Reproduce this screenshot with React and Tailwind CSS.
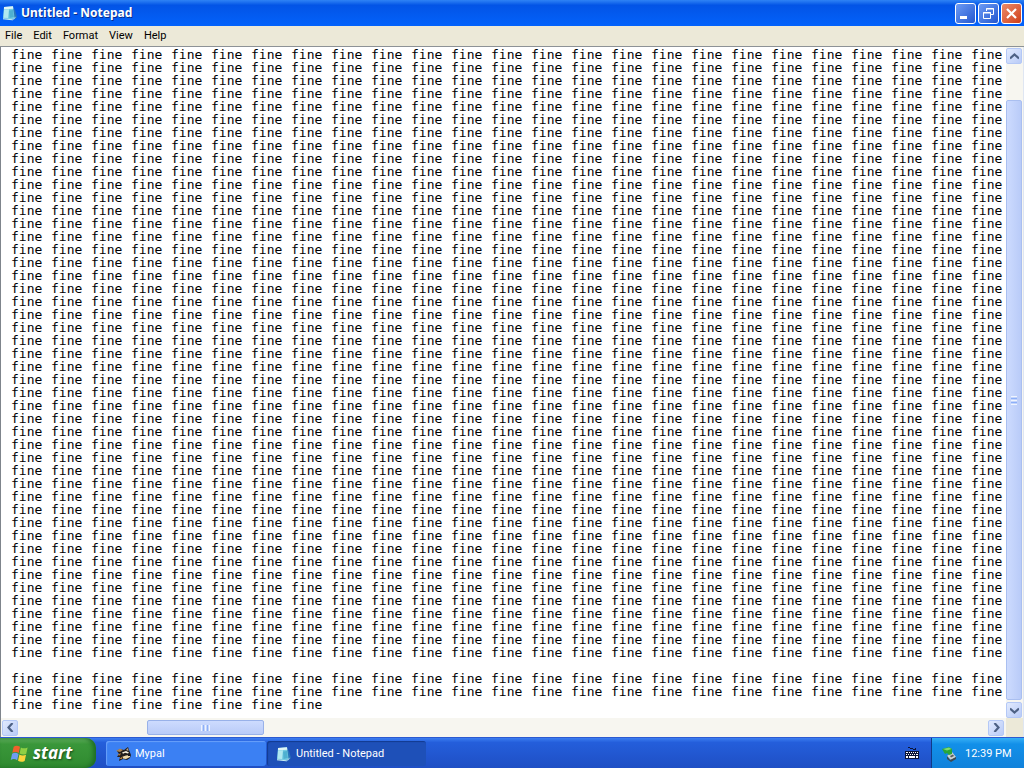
import React from "react";

const words = (n) => Array(n).fill("fine").join("\t");
const DOCUMENT = [...Array(47).fill(words(25)), "", words(25), words(25), words(8)].join("\n");

function NotepadIcon() {
  return (
    <svg viewBox="0 0 16 16" className="size-4 shrink-0" aria-hidden="true">
      <path d="M11 3l2 2 2 7-3 3z" fill="#2a74b8" />
      <path d="M2 2l9-.8 1.500 11.300-2 2L1 13.500z" fill="#74cbe2" />
      <path d="M2 2l9-.8.3 2.500L2 4.200z" fill="#e0f5f5" />
      <path d="M2 4.500l5-.3L6 13l-4.500-.3z" fill="#b0e8f0" />
      <path d="M7 5.500l4-.5.8 7-4.300 1z" fill="#4fb0d0" />
      <path d="M1 13.800l9.500 1 3-2.500" stroke="#c9eef2" fill="none" />
    </svg>
  );
}

function WindowsFlag() {
  return (
    <svg viewBox="0 0 18 18" className="size-[19px] shrink-0" aria-hidden="true">
      <path d="M3.500 2.500c2-1.300 4-1 6 .2L8.300 8.500c-2-1.200-4-1.400-6.100-.2z" fill="#f0612c" />
      <path d="M10.300 3.200c2 1.100 4 1.200 6.400 0l-1.300 6c-2.300 1.200-4.300 1-6.300-.2z" fill="#8fd044" />
      <path d="M2 9.200c2.100-1.200 4.100-1 6.100.2l-1.300 6c-2-1.300-4-1.500-6.100-.2z" fill="#6d9df2" />
      <path d="M8.900 9.900c2 1.200 4 1.300 6.300.2l-1.300 5.900c-2.300 1.200-4.300 1.100-6.300-.1z" fill="#fbd43c" />
    </svg>
  );
}

function MypalIcon() {
  return (
    <svg viewBox="0 0 16 16" className="size-4 shrink-0" aria-hidden="true">
      <path d="M1 5l3-2 4 1 4-3 1 3 2 5-1 3-3 2-4-1-4 2 1-4-3 0 2-3z" fill="#231c1c" />
      <path d="M0 5l4-2.500L7 4 4 6z" fill="#a98354" />
      <path d="M10 4l2-2 .5 3z" fill="#b8a184" />
      <path d="M6 6.500l4-1.500 3 1.500-1 1-3-.8-2 1z" fill="#f7efdc" />
      <path d="M7 10.500l3-1 4-.5v2l-4 2-3-.5z" fill="#f0d9ab" />
      <path d="M1 9l4-2-1 2.500zM3 13l4-3-1 3z" fill="#b07a3e" />
      <path d="M12 8.500h2v1.500h-2z" fill="#15121a" />
    </svg>
  );
}

function KeyboardIcon() {
  return (
    <svg viewBox="0 0 14 14" className="size-[14px]" aria-hidden="true">
      <path d="M3 1h2v1h3v1h2V2h1v2H8V3H5V2H3z" fill="#0b1438" />
      <path d="M0 5h14v8H0z" fill="#0b1438" />
      <path
        d="M1 6h2v1H1zM4 6h1v1H4zM6 6h1v1H6zM8 6h1v1H8zM10 6h1v1h-1zM12 6h1v1h-1zM1 8h1v1H1zM3 8h1v1H3zM5 8h1v1H5zM7 8h1v1H7zM9 8h1v1H9zM11 8h2v1h-2zM1 10h2v2H1zM4 10h6v2H4zM11 10h2v2h-2z"
        fill="#fff"
      />
    </svg>
  );
}

function SafelyRemoveIcon() {
  return (
    <svg viewBox="0 0 16 16" className="size-4" aria-hidden="true">
      <path d="M5 10l5-4 4 5-5 3z" fill="#ced2d0" />
      <path d="M8 14l6-3v2l-5 3-4-3v-3z" fill="#424a50" />
      <path d="M8 10l3-1.500 1 1.500-3 1.500z" fill="#555d60" />
      <path d="M0 3l7-2 3 2v5L7 9 5 7 3 8z" fill="#28a63b" />
      <path d="M1 3l6-1.500L9.500 3 5 4.500z" fill="#80db70" />
    </svg>
  );
}

function Chevron({ d }) {
  return (
    <svg viewBox="0 0 9 9" className="size-[9px]" aria-hidden="true">
      <path d={d} stroke="#4d6185" strokeWidth="2.200" fill="none" />
    </svg>
  );
}

function ScrollButton({ label, d }) {
  return (
    <button
      aria-label={label}
      className="flex size-4 shrink-0 items-center justify-center rounded-xs border border-[#b4c8f6] bg-linear-to-br from-[#e1eafe] to-[#b9cbf7]"
    >
      <Chevron d={d} />
    </button>
  );
}

const CAPTION = "flex size-[21px] items-center justify-center rounded-[3px] border border-white";

export default function App() {
  return (
    <div className="flex h-screen flex-col overflow-hidden bg-white font-[Roboto,sans-serif] text-[11px] text-black">
      <header className="flex h-[26px] shrink-0 items-center bg-linear-to-b from-[#2f83f5] via-[#0354e6] via-20% to-[#0362fb] px-0.5">
        <NotepadIcon />
        <h1 className="grow pl-[3px] font-['Noto_Sans',sans-serif] text-[12px] font-bold text-white [text-shadow:1px_1px_#0a2d8c]">
          Untitled - Notepad
        </h1>
        <div className="flex gap-0.5">
          <button aria-label="Minimize" className={`${CAPTION} bg-linear-to-br from-[#6d9bf4] to-[#2456cf]`}>
            <svg viewBox="0 0 19 19" className="size-[19px]"><path d="M4 12h7v3H4z" fill="#fff" /></svg>
          </button>
          <button aria-label="Restore" className={`${CAPTION} bg-linear-to-br from-[#6d9bf4] to-[#2456cf]`}>
            <svg viewBox="0 0 19 19" className="size-[19px]" fill="none" stroke="#fff">
              <path d="M7.500 7V4.500h7v6H12M7 5h8M4.500 8.500h7v6h-7zM4 9h8" />
            </svg>
          </button>
          <button aria-label="Close" className={`${CAPTION} bg-linear-to-br from-[#ec8a68] to-[#cf3c12]`}>
            <svg viewBox="0 0 19 19" className="size-[19px]"><path d="M5 5l9 9M14 5l-9 9" stroke="#fff" strokeWidth="2.200" /></svg>
          </button>
        </div>
      </header>

      <nav className="flex h-[21px] shrink-0 items-center gap-[11px] border-b border-[#8d9296] bg-[#ece9d8] pl-[5px]">
        <button>File</button>
        <button>Edit</button>
        <button>Format</button>
        <button>View</button>
        <button>Help</button>
      </nav>

      <main className="flex min-h-0 grow flex-col border-x border-l-[#7f858c] border-r-[#dfe6f2]">
        <div className="flex min-h-0 grow">
          <textarea
            aria-label="Document text"
            wrap="off"
            spellCheck={false}
            defaultValue={DOCUMENT}
            className="min-w-0 grow resize-none overflow-hidden bg-white pt-px pl-2.5 font-['DejaVu_Sans_Mono',monospace] text-[13px] leading-[13px] whitespace-pre outline-none [tab-size:40px]"
          />
          <div className="flex w-[17px] shrink-0 flex-col items-start bg-[#f7f6f0] pt-px">
            <ScrollButton label="Scroll up" d="M0 6.500l4.500-4 4.500 4" />
            <div className="h-9 shrink-0" />
            <div className="flex w-4 grow flex-col items-center justify-center gap-px rounded-xs border border-[#aabff0] bg-linear-to-r from-[#cddbfe] to-[#b9cbf8]">
              <span className="h-px w-1.5 bg-[#eef4fe]" />
              <span className="h-px w-1.5 bg-[#8cb0f8]" />
              <span className="h-px w-1.5 bg-[#eef4fe]" />
              <span className="h-px w-1.5 bg-[#8cb0f8]" />
              <span className="h-px w-1.5 bg-[#eef4fe]" />
            </div>
            <div className="h-0.5 shrink-0" />
            <ScrollButton label="Scroll down" d="M0 2.500l4.500 4 4.500-4" />
          </div>
        </div>
        <div className="flex h-[19px] shrink-0">
          <div className="flex grow items-center bg-[#f7f6f0] pr-0.5 pl-px">
            <ScrollButton label="Scroll left" d="M6.500 0l-4 4.500 4 4.500" />
            <div className="flex grow">
              <div className="w-2/15" />
              <div className="flex h-[15px] w-[12%] items-center justify-center gap-px rounded-xs border border-[#98b1e9] bg-linear-to-b from-[#cddbfe] to-[#b9cbf8]">
                <span className="h-1.5 w-px bg-[#eef4fe]" />
                <span className="h-1.5 w-px bg-[#8cb0f8]" />
                <span className="h-1.5 w-px bg-[#eef4fe]" />
                <span className="h-1.5 w-px bg-[#8cb0f8]" />
                <span className="h-1.5 w-px bg-[#eef4fe]" />
              </div>
            </div>
            <ScrollButton label="Scroll right" d="M2.500 0l4 4.500-4 4.500" />
          </div>
          <div className="w-[17px] bg-[#ece9d8]" />
        </div>
      </main>

      <footer className="flex h-[31px] shrink-0 items-stretch border-t border-[#2c5ad0] bg-linear-to-b from-[#3c7df0] via-[#245edb] via-15% to-[#1f4fc4] text-white">
        <button className="flex w-24 items-center gap-1 rounded-r-[10px] bg-linear-to-b from-[#63b260] via-[#3a973a] via-20% to-[#2f8a2f] pl-2.5 shadow-[inset_-3px_0_4px_#1f6d25]">
          <WindowsFlag />
          <span className="font-['Open_Sans',sans-serif] text-[17px] leading-5 font-bold italic [text-shadow:1px_1px_2px_#174c1a]">start</span>
        </button>
        <div className="flex min-w-0 grow items-center gap-px pl-2.5">
          <button className="flex h-[25px] w-40 items-center gap-[3px] rounded-[3px] bg-[#3b80f3] pt-0.5 pl-2.5 shadow-[inset_1px_1px_1px_#6aa0fa]">
            <MypalIcon />
            <span>Mypal</span>
          </button>
          <button className="flex h-[25px] w-[159px] items-center gap-1 rounded-[3px] bg-[#1e50b8] pt-0.5 pl-[9px] shadow-[inset_1px_1px_1px_#123a8f]">
            <NotepadIcon />
            <span>Untitled - Notepad</span>
          </button>
        </div>
        <button aria-label="Keyboard layout" className="flex items-center px-3">
          <KeyboardIcon />
        </button>
        <div className="flex w-[93px] items-center gap-[7px] border-l border-[#103a87] bg-linear-to-b from-[#35b0f5] via-[#1290e9] via-20% to-[#1182db] pt-0.5 pl-2.5">
          <SafelyRemoveIcon />
          <time dateTime="12:39">12:39 PM</time>
        </div>
      </footer>
    </div>
  );
}
